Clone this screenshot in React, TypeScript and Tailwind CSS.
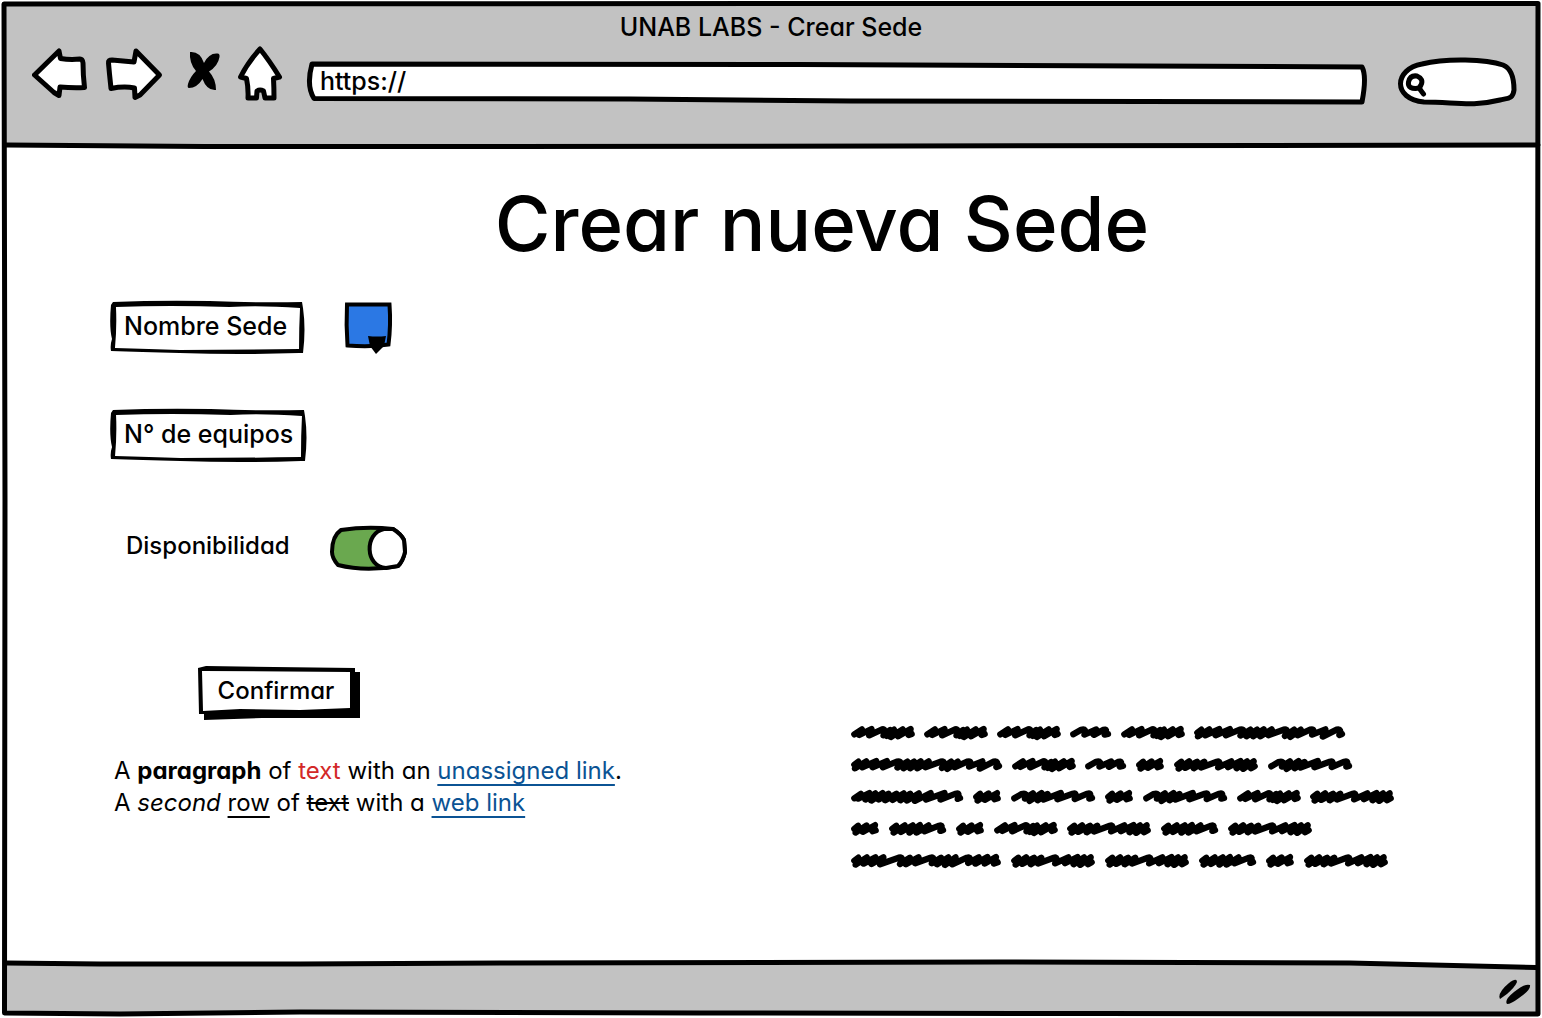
import { useState, type ReactNode } from "react";

type OutlineProps = { viewBox: string; children: ReactNode };

function Outline({ viewBox, children }: OutlineProps) {
  return (
    <svg
      aria-hidden="true"
      viewBox={viewBox}
      preserveAspectRatio="none"
      className="pointer-events-none absolute inset-0 h-full w-full overflow-visible"
      strokeLinejoin="round"
      strokeLinecap="round"
    >
      {children}
    </svg>
  );
}

const words = {
  a: {
    width: "w-[63px]",
    box: "0 0 190 48",
    d: "M10 28L33 13L25 30L62 12L55 31L94 13Q106 10 98 31L118 15L108 33L130 14L120 36L156 13L142 34L180 12L174 30L183 27",
  },
  b: {
    width: "w-[41px]",
    box: "0 0 125 48",
    d: "M10 28L34 14Q52 9 44 29L80 13L73 30L102 14Q116 10 106 29L116 27",
  },
  c: {
    width: "w-[151px]",
    box: "0 0 455 48",
    d: "M10 23L22 14L12 34L46 13L34 31L76 12L65 31L108 12L96 31L138 14Q158 10 140 32L170 14L158 34L190 14L178 34L210 13L200 34L234 13L224 31L270 14Q288 10 274 33L302 14L290 36L322 14L312 31L350 14Q366 10 356 29L396 13L388 35L430 14Q446 10 438 30L446 27",
  },
  d: {
    width: "w-[112px]",
    box: "0 0 340 48",
    d: "M10 28L30 14L22 29L56 12L44 32L74 13L62 35L96 12L84 32L114 14L104 34L138 14L126 33L160 13L150 34L180 14L170 35L206 13L194 36L242 12L228 32L284 12L272 32L318 14Q332 10 324 30L331 27",
  },
  e: {
    width: "w-[28px]",
    box: "0 0 86 48",
    d: "M10 24L22 14L14 35L48 13L36 33L74 12L66 31L76 28",
  },
  f: {
    width: "w-[84px]",
    box: "0 0 255 48",
    d: "M10 23L22 14L14 35L46 13L34 33L70 14L60 34L92 14L82 32L130 14Q144 10 134 31L174 13L164 31L202 12L190 34L222 13L210 36L242 13L234 34L245 28",
  },
  g: {
    width: "w-[84px]",
    box: "0 0 253 48",
    d: "M10 28L32 15Q50 9 42 29L66 13L56 36L92 12L80 34L110 15L98 32L150 12L140 31L186 14Q200 10 192 30L230 14Q244 10 236 29L244 27",
  },
  h: {
    width: "w-[57px]",
    box: "0 0 173 48",
    d: "M10 23L22 14L14 35L48 13L36 33L72 13L62 35L94 12L84 35L120 13L108 31L152 14Q166 10 156 30L164 27",
  },
  i: {
    width: "w-[150px]",
    box: "0 0 453 48",
    d: "M10 23L22 14L14 35L48 13L38 32L74 13L62 33L98 13L88 34L144 14Q162 10 148 33L178 14L166 34L204 13L194 31L240 14Q256 10 244 31L272 14L260 34L294 13L284 36L316 13L306 34L350 14Q366 10 354 30L386 13L376 32L412 12L404 32L438 12L432 32L443 28",
  },
};

type WordName = keyof typeof words;

const scribbles: WordName[][] = [
  ["a", "a", "a", "b", "a", "c"],
  ["c", "a", "b", "e", "f", "g"],
  ["d", "e", "g", "e", "g", "a", "f"],
  ["e", "h", "e", "a", "f", "h", "f"],
  ["i", "f", "f", "h", "e", "f"],
];

function Scribble({ name }: { name: WordName }) {
  const word = words[name];
  return (
    <svg viewBox={word.box} className={`${word.width} h-4 shrink-0 overflow-visible`}>
      <path d={word.d} fill="none" stroke="#000" strokeWidth="19" strokeLinejoin="round" strokeLinecap="round" />
    </svg>
  );
}

function ToolIcon({ viewBox, className, label, children }: { viewBox: string; className: string; label: string; children: ReactNode }) {
  return (
    <button type="button" aria-label={label} className={`${className} h-15 shrink-0`}>
      <svg
        viewBox={viewBox}
        className="h-full w-full"
        fill="#fff"
        stroke="#000"
        strokeWidth="5"
        strokeLinejoin="round"
        strokeLinecap="round"
      >
        {children}
      </svg>
    </button>
  );
}

function SketchField({ label, value, className }: { label: string; value: string; className: string }) {
  return (
    <div className={`relative h-13 ${className}`}>
      <input
        aria-label={label}
        defaultValue={value}
        className="h-full w-full bg-transparent pr-1 pb-[3px] pl-[14px] outline-none"
      />
      <Outline viewBox="0 0 196 52">
        <path
          fill="#000"
          fillRule="evenodd"
          d="M3 1Q50 -1 100 0Q150 2 193 1L194 7Q197 28 194 52L190 52Q130 54 70 52Q30 51 1 50Q0 44 2 38Q-1 26 1 4ZM6 6Q7 26 5 47Q40 48 70 49Q130 49 190 48Q190 26 191 7Q150 4 120 6Q60 4 6 6Z"
        />
      </Outline>
    </div>
  );
}

export default function App() {
  const [available, setAvailable] = useState(true);

  return (
    <div className="relative flex min-h-screen flex-col bg-white p-1 font-['Inter','Liberation_Sans',sans-serif] text-[25px] leading-8 font-medium text-black [font-feature-settings:'cv11']">
      <header className="relative h-[141px] bg-[#c2c2c2]">
        <h2 className="pt-[7px] text-center">UNAB LABS - Crear Sede</h2>
        <div className="mt-[3px] flex items-start pr-[21px] pl-7">
          <ToolIcon label="Back" viewBox="32 46 56 60" className="w-14">
            <path d="M34.500 75L59 51L60.500 58.500Q70 60 80 59Q82.500 59 83 63Q83 75 84.500 87.500Q72 88 60 87L59 95.500L54 92.500Z" />
          </ToolIcon>
          <ToolIcon label="Forward" viewBox="105 46 59 60" className="ml-[17px] w-[59px]">
            <path d="M136 51L159.500 75L140 95L135 97.500L134.500 88Q124 86 111 88.500L109.500 74L108.500 63Q108 60 112 60Q123 61 134 62Z" />
          </ToolIcon>
          <ToolIcon label="Stop" viewBox="187 46 34 60" className="ml-[23px] w-[34px]">
            <path stroke="none" fill="#000" d="M190 52Q200 51 204 63Q209 53 217 53.500Q220 53 219.500 57Q218 66 209 71.500Q216 79 216 90Q207 91 202.500 79Q197 88 189 88Q187 88 188 84Q190 77 196 71Q189 63 190 52Z" />
          </ToolIcon>
          <ToolIcon label="Home" viewBox="237 46 46 60" className="ml-4 w-[46px]">
            <path d="M260 49Q269 60 279.500 77L273.500 78.500Q274 88 274 98L265 98L263.500 91Q260 89 257 91L256.500 98L248 98Q248.500 88 246.500 78.500L240.500 77Q248 62 260 49Z" />
          </ToolIcon>
          <div className="relative mt-4 ml-6 h-[42px] min-w-0 flex-1">
            <Outline viewBox="307 62 1060 42">
              <path
                fill="#fff"
                stroke="#000"
                strokeWidth="5"
                vectorEffect="non-scaling-stroke"
                d="M312 64L800 64.500L1361 67Q1366 76 1361 102L850 101L630 99L314 98.500Q306 86 312 64Z"
              />
            </Outline>
            <input
              aria-label="Address"
              defaultValue="https://"
              className="relative h-[38px] w-full bg-transparent px-[13px] outline-none"
            />
          </div>
          <div className="relative mt-3 ml-[31px] h-12 w-[118px] shrink-0">
            <Outline viewBox="1399 58 118 48">
              <path
                fill="#fff"
                stroke="#000"
                strokeWidth="5"
                d="M1424 102C1392 99 1394 69 1422 64C1446 58 1486 59 1503 65C1513 69 1514 83 1514 90C1513 99 1508 98 1500 100C1472 107 1455 102 1424 102Z"
              />
              <path
                fill="none"
                stroke="#000"
                strokeWidth="5"
                d="M1420 88Q1407 90 1408.500 82Q1410 75 1417 76Q1424 79 1421 85L1419 88L1423.500 94"
              />
            </Outline>
            <input aria-label="Search" type="search" className="relative h-full w-full bg-transparent pr-4 pl-9 outline-none" />
          </div>
        </div>
        <Outline viewBox="0 0 1534 141">
          <path fill="none" stroke="#000" strokeWidth="5" vectorEffect="non-scaling-stroke" d="M2 141L200 142.500L500 142.500L900 142L1534 141" />
        </Outline>
      </header>

      <main className="grid flex-1 grid-cols-[minmax(0,1fr)_545px] grid-rows-[auto_1fr] pr-[142px] pl-[106px]">
        <h1 className="col-span-2 mt-8 pl-[138px] text-center text-[76px] leading-[92px] font-medium">Crear nueva Sede</h1>
        <form className="mt-8" onSubmit={(event) => event.preventDefault()}>
          <div className="flex items-start">
            <SketchField label="Nombre Sede" value="Nombre Sede" className="w-[195px]" />
            <button type="button" aria-label="Color" className="relative ml-[39px] h-13 w-12">
              <Outline viewBox="344 301 48 52">
                <path fill="#2b78e4" stroke="#000" strokeWidth="4" strokeLinejoin="miter" d="M347 304.500L389.500 304.500Q391 325 388.500 344.500Q370 347.500 347.500 345.500Q346 325 347 304.500Z" />
                <path fill="#000" d="M368 336Q377 337 386 336L384 346L376 354L370 346Z" />
              </Outline>
            </button>
          </div>
          <SketchField label="N° de equipos" value="N° de equipos" className="mt-14 w-[197px]" />
          <label className="mt-16 ml-4 flex h-12 items-center">
            <span className="w-[204px] pb-[6px] text-[24px]">Disponibilidad</span>
            <span className="relative h-11 w-[78px]">
              <input
                type="checkbox"
                role="switch"
                checked={available}
                onChange={(event) => setAvailable(event.target.checked)}
                className="absolute inset-0 h-full w-full opacity-0"
              />
              <Outline viewBox="330 526 78 44">
                <path
                  fill={available ? "#6aa84f" : "#ccc"}
                  stroke="#000"
                  strokeWidth="4"
                  d="M341 529Q367 525 393 528Q401 533 404 539L405 551Q403 560 398 565Q365 571 338 564Q332 557 332 551Q332 535 341 529Z"
                />
                <path
                  fill="#fff"
                  stroke="#000"
                  strokeWidth="4"
                  d={available
                    ? "M393 528Q401 533 404 539L405 551Q403 560 398 565L386 567C365 566 364 532 384 528Z"
                    : "M341 529Q332 535 332 551Q332 557 338 564L352 567C373 566 374 532 354 528Z"}
                />
              </Outline>
            </span>
          </label>
          <button type="submit" className="relative mt-[94px] ml-[88px] flex h-[52px] w-[162px] items-center justify-center pr-[6px] pb-1 text-[24px]">
            <Outline viewBox="198 667 162 52">
              <path fill="#000" d="M198 668L206 666L355 668L355 672L360 672L360 718L262 718L204 720L204 714L199 714Z" />
              <path fill="#fff" d="M202 671L350 672L350 708L300 710L240 709L203 711Z" />
            </Outline>
            <span className="relative">Confirmar</span>
          </button>
          <p className="mt-9 ml-1 text-[24px] leading-8 font-normal whitespace-nowrap">
            A <b className="font-bold">paragraph</b> of <span className="text-[#d32828]">text</span> with an{" "}
            <a href="#unassigned" className="text-[#0b5394] underline decoration-2 underline-offset-[5px]">unassigned link</a>.
            <br />
            A <i>second</i> <u className="decoration-2 underline-offset-[5px]">row</u> of <s className="decoration-2">text</s> with a{" "}
            <a href="#web" className="text-[#0b5394] underline decoration-2 underline-offset-[5px]">web link</a>
          </p>
        </form>
        <div className="mt-[448px]">
          {scribbles.map((line, index) => (
            <div key={index} className="flex h-8 items-center gap-[10px]">
              {line.map((name, position) => (
                <Scribble key={position} name={name} />
              ))}
            </div>
          ))}
        </div>
      </main>

      <footer className="relative flex h-[49px] items-center justify-end">
        <Outline viewBox="4 965 1534 49">
          <path fill="#c2c2c2" d="M4 963L200 964L700 962L1300 962L1538 967L1538 1014L4 1014Z" />
          <path fill="none" stroke="#000" strokeWidth="5" vectorEffect="non-scaling-stroke" d="M6 963L100 964L300 964L500 963L1000 962L1350 963L1536 967.500" />
        </Outline>
        <svg viewBox="1498 979 34 28" className="relative mr-[6px] mt-[5px] h-7 w-[34px]">
          <path d="M1500 1000Q1497 994 1509 984Q1517 978 1517 983Q1515 988 1507 995Z" />
          <path d="M1507 1005Q1504 1001 1514 993Q1525 984 1530 986Q1531 991 1519 999Q1511 1005 1507 1005Z" />
        </svg>
      </footer>

      <Outline viewBox="0 0 1542 1018">
        <path
          fill="none"
          stroke="#000"
          strokeWidth="5"
          vectorEffect="non-scaling-stroke"
          d="M4 4L800 3.500L1538 3.500L1537.500 500L1538 1014L1100 1013.500L700 1013L300 1012L120 1014L4.500 1013L5 500Z"
        />
      </Outline>
    </div>
  );
}
